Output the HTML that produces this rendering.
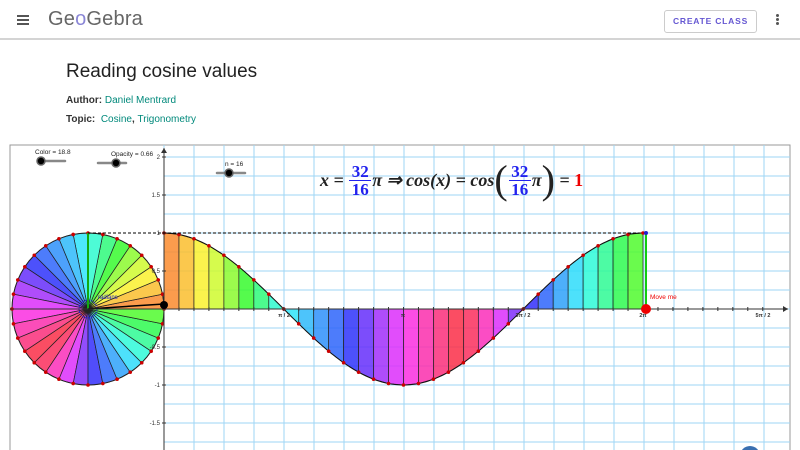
<!DOCTYPE html>
<html><head><meta charset="utf-8"><style>
*{margin:0;padding:0;box-sizing:border-box}
body{width:800px;height:450px;overflow:hidden;background:#fff;font-family:"Liberation Sans",sans-serif;position:relative}
.hdr{position:absolute;left:0;top:0;width:800px;height:40px;background:#fff;border-bottom:2px solid #d4d4d4}
.abs{position:absolute}
.btn{left:664px;top:10px;width:93px;height:23px;border:1px solid #ccc;border-radius:3px;color:#6557d2;font-size:8.5px;font-weight:bold;letter-spacing:.8px;text-align:center;line-height:21px}
.meta{font-size:10px;color:#333;font-weight:bold}
.meta span{color:#00897b;font-weight:normal}
.f{font-family:"Liberation Serif",serif;font-style:italic;font-weight:bold;font-size:18px;color:#222;display:flex;align-items:center;white-space:pre}
.fr{display:inline-flex;flex-direction:column;align-items:center;font-style:normal;color:#2222ee;font-size:17px;line-height:17px;margin:0 1px}
.fr i{border-top:1px solid #2222ee;width:22px;display:block;height:0}
</style></head><body>
<div class="hdr">
 <div class="abs" style="left:17px;top:15px;width:12px;height:2px;background:#555;box-shadow:0 4px 0 #555,0 8px 0 #555"></div>
 <div class="abs" style="left:48px;top:8px;font-size:20px;color:#666;letter-spacing:.2px">Ge<span style="color:#8a86d6">o</span>Gebra</div>
 <div class="abs btn">CREATE CLASS</div>
 <div class="abs" style="left:776px;top:14px;width:3px;height:3px;background:#555;border-radius:2px;box-shadow:0 4px 0 #555,0 8px 0 #555"></div>
</div>
<div class="abs" style="left:66px;top:61px;font-size:19px;color:#222">Reading cosine values</div>
<div class="abs meta" style="left:66px;top:95px">Author: <span>Daniel Mentrard</span></div>
<div class="abs meta" style="left:66px;top:114px">Topic:&nbsp; <span>Cosine</span>, <span>Trigonometry</span></div>
<svg class="abs" style="left:0;top:0" width="800" height="450" id="g"></svg>
<div class="abs f" style="left:320px;top:160px">x = <span class="fr">32<i></i>16</span>π ⇒ cos(x) = cos<span style="font-size:40px;font-weight:normal;font-style:normal;line-height:40px">(</span><span class="fr">32<i></i>16</span>π<span style="font-size:40px;font-weight:normal;font-style:normal;line-height:40px">)</span> = <span style="color:#e00;font-style:normal">1</span></div>
<script>
var s='';
var L=10,T=145,R=790,ox=164,oy=309,ux=479/(2*Math.PI),uy=76;
s+='<rect x="'+L+'" y="'+T+'" width="'+(R-L)+'" height="310" fill="#fff" stroke="#999"/>';
for(var x=ox;x<R;x+=30)s+='<line x1="'+x+'" y1="'+T+'" x2="'+x+'" y2="450" stroke="#9ed6f5" stroke-width="1"/>';
for(var y=oy;y>T;y-=19)s+='<line x1="'+ox+'" y1="'+y+'" x2="'+R+'" y2="'+y+'" stroke="#9ed6f5"/>';
for(var y=oy+19;y<450;y+=19)s+='<line x1="'+ox+'" y1="'+y+'" x2="'+R+'" y2="'+y+'" stroke="#9ed6f5"/>';
var K=[[0,20],[45,80],[90,180],[135,230],[180,300],[225,360],[270,250],[315,180],[360,100]];
function hue(a){a=((a%360)+360)%360;for(var i=0;i<8;i++){if(a<=K[i+1][0]){var t=(a-K[i][0])/45;return K[i][1]+t*(K[i+1][1]-K[i][1]);}}return 100;}
function col(a){return 'hsla('+hue(a)+',95%,58%,0.85)';}
var cx=88,cy=309,r=76,n=32;
for(var i=0;i<n;i++){var a1=i*2*Math.PI/n,a2=(i+1)*2*Math.PI/n;
s+='<path d="M'+cx+' '+cy+'L'+(cx+r*Math.cos(a1))+' '+(cy-r*Math.sin(a1))+'A'+r+' '+r+' 0 0 0 '+(cx+r*Math.cos(a2))+' '+(cy-r*Math.sin(a2))+'Z" fill="'+col((i+0.5)*360/n)+'" stroke="#222" stroke-width=".7"/>';}
s+='<circle cx="'+cx+'" cy="'+cy+'" r="'+r+'" fill="none" stroke="#222"/>';
for(var i=0;i<n;i++){var a=i*2*Math.PI/n;s+='<circle cx="'+(cx+r*Math.cos(a))+'" cy="'+(cy-r*Math.sin(a))+'" r="1.8" fill="#c00"/>';}
s+='<circle cx="'+cx+'" cy="'+cy+'" r="9" fill="none" stroke="#22c" stroke-dasharray="2 1"/>';
s+='<line x1="'+cx+'" y1="'+cy+'" x2="'+cx+'" y2="'+(cy-r)+'" stroke="#1a1" stroke-width="2"/>';
s+='<text x="98" y="299" font-size="6" fill="#22c">radians</text>';
s+='<line x1="'+cx+'" y1="'+cy+'" x2="164" y2="304" stroke="#000" stroke-width="1.5"/>';
var N=32,w=479/N;
for(var i=0;i<N;i++){var x1=ox+i*w,x2=x1+w,c1=Math.cos(i*Math.PI/16),c2=Math.cos((i+1)*Math.PI/16);
s+='<path d="M'+x1+' '+oy+'L'+x1+' '+(oy-c1*uy)+'L'+x2+' '+(oy-c2*uy)+'L'+x2+' '+oy+'Z" fill="'+col((i+0.5)*360/N)+'" stroke="#222" stroke-width=".7"/>';}
var d='M'+ox+' '+(oy-uy);for(var x=0;x<=479;x+=2)d+='L'+(ox+x)+' '+(oy-Math.cos(x/ux)*uy);
s+='<path d="'+d+'" fill="none" stroke="#111" stroke-width="1"/>';
for(var i=0;i<=N;i++)s+='<circle cx="'+(ox+i*w)+'" cy="'+(oy-Math.cos(i*Math.PI/16)*uy)+'" r="1.8" fill="#c00"/>';
s+='<line x1="'+L+'" y1="'+oy+'" x2="'+(R-2)+'" y2="'+oy+'" stroke="#333"/><path d="M'+(R-2)+' '+oy+'l-5 -3v6z" fill="#333"/>';
s+='<line x1="'+ox+'" y1="450" x2="'+ox+'" y2="'+(T+3)+'" stroke="#333"/><path d="M'+ox+' '+(T+3)+'l-3 5h6z" fill="#333"/>';
for(var i=1;i<=40;i++){var x=ox+i*w;if(x<R)s+='<line x1="'+x+'" y1="'+(oy-2)+'" x2="'+x+'" y2="'+(oy+2)+'" stroke="#333"/>';}
var yl=[[2,'2'],[1.5,'1.5'],[1,'1'],[0.5,'0.5'],[-0.5,'-0.5'],[-1,'-1'],[-1.5,'-1.5']];
yl.forEach(function(v){var y=oy-v[0]*uy;s+='<line x1="'+(ox-2)+'" y1="'+y+'" x2="'+(ox+2)+'" y2="'+y+'" stroke="#333"/><text x="'+(ox-4)+'" y="'+(y+2)+'" font-size="6" text-anchor="end" fill="#333">'+v[1]+'</text>';});
[[284,'π / 2'],[403,'π'],[523,'3π / 2'],[643,'2π'],[763,'5π / 2']].forEach(function(v){s+='<text x="'+v[0]+'" y="'+(oy+8)+'" font-size="5.5" font-weight="bold" text-anchor="middle" fill="#333">'+v[1]+'</text>';});
s+='<line x1="88" y1="233" x2="640" y2="233" stroke="#000" stroke-dasharray="3 2"/>';
s+='<line x1="646" y1="233" x2="646" y2="309" stroke="#1c1" stroke-width="2"/>';
s+='<circle cx="646" cy="233" r="2" fill="#22c"/>';
s+='<circle cx="646" cy="309" r="5" fill="#e00"/><text x="650" y="299" font-size="6.5" fill="#e00">Move me</text>';
s+='<circle cx="164" cy="305" r="4" fill="#000"/>';
function sl(x1,x2,y,k,lab,lx){s+='<line x1="'+x1+'" y1="'+y+'" x2="'+x2+'" y2="'+y+'" stroke="#888" stroke-width="2.5" stroke-linecap="round"/><circle cx="'+k+'" cy="'+y+'" r="4" fill="#000" stroke="#666" stroke-width="1.5"/><text x="'+lx+'" y="'+(y-7)+'" font-size="6.5" fill="#222">'+lab+'</text>';}
sl(38,65,161,41,'Color = 18.8',35);sl(98,126,163,116,'Opacity = 0.66',111);sl(217,245,173,229,'n = 16',225);
s+='<circle cx="750" cy="456" r="10" fill="#3a6fb0"/>';
document.getElementById('g').innerHTML=s;
</script>
</body></html>
